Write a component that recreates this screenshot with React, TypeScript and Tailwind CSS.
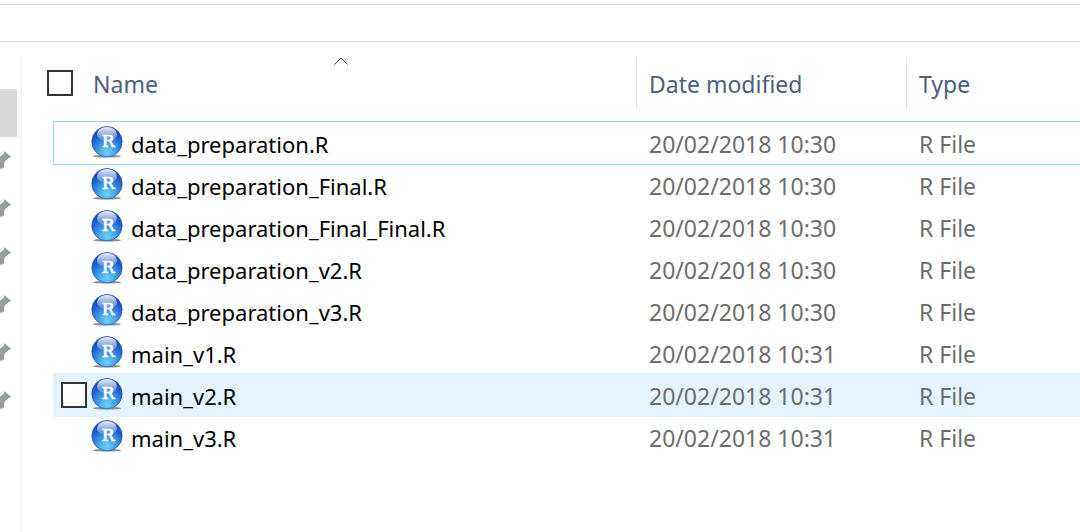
import { useState } from "react";

type FileEntry = { name: string; modified: string; type: string };

const files: FileEntry[] = [
  { name: "data_preparation.R", modified: "20/02/2018 10:30", type: "R File" },
  { name: "data_preparation_Final.R", modified: "20/02/2018 10:30", type: "R File" },
  { name: "data_preparation_Final_Final.R", modified: "20/02/2018 10:30", type: "R File" },
  { name: "data_preparation_v2.R", modified: "20/02/2018 10:30", type: "R File" },
  { name: "data_preparation_v3.R", modified: "20/02/2018 10:30", type: "R File" },
  { name: "main_v1.R", modified: "20/02/2018 10:31", type: "R File" },
  { name: "main_v2.R", modified: "20/02/2018 10:31", type: "R File" },
  { name: "main_v3.R", modified: "20/02/2018 10:31", type: "R File" },
];

const pins = [1, 2, 3, 4, 5, 6];

function IconDefs() {
  return (
    <svg className="absolute size-0" aria-hidden="true">
      <defs>
        <radialGradient id="ball" cx="0.5" cy="0.85" r="0.78">
          <stop offset="0" stopColor="#6fd3f7" />
          <stop offset="0.35" stopColor="#45a3e8" />
          <stop offset="0.75" stopColor="#1f60cf" />
          <stop offset="1" stopColor="#1a45b4" />
        </radialGradient>
        <linearGradient id="gloss" x1="0" y1="0" x2="0" y2="1">
          <stop offset="0" stopColor="#fff" stopOpacity="0.92" />
          <stop offset="1" stopColor="#fff" stopOpacity="0.1" />
        </linearGradient>
      </defs>
    </svg>
  );
}

function RFileIcon() {
  return (
    <svg viewBox="0 0 32 32" className="size-8 shrink-0" aria-hidden="true">
      <ellipse cx="16" cy="30.2" rx="14" ry="1.4" fill="#8d8d8d" />
      <circle cx="16" cy="15.7" r="15.2" fill="url(#ball)" stroke="#1c4ab5" strokeWidth="0.6" />
      <ellipse cx="16" cy="8.2" rx="10" ry="7.2" fill="url(#gloss)" />
      <text
        x="17.2"
        y="21.3"
        textAnchor="middle"
        fontSize="17"
        fill="#fff"
        stroke="#fff"
        strokeWidth="0.7"
        fontFamily="DejaVu Serif, serif"
      >
        R
      </text>
    </svg>
  );
}

function PinIcon() {
  return (
    <svg viewBox="0 0 12 20" className="h-5 w-3" fill="#929da3" aria-hidden="true">
      <path d="M4.5 1L11 7L9.5 8L8.5 8L4.5 12L4 17L2.5 18.5L0 18.5V6.5L4 3.5Z" />
    </svg>
  );
}

function Tick({ label }: { label: string }) {
  return (
    <input
      type="checkbox"
      aria-label={label}
      className="block size-[26px] shrink-0 appearance-none border-2 border-[#333] bg-white checked:bg-[#0078d7]"
    />
  );
}

export default function App() {
  const [focused, setFocused] = useState(0);
  const hovered = 6;

  return (
    <div className="min-h-screen overflow-x-hidden bg-white font-['Noto_Sans','Open_Sans',sans-serif] text-[23px] leading-8">
      <IconDefs />
      <header className="mt-1 h-[38px] border-y border-[#d9d9d9]" />
      <div className="flex">
        <nav className="mt-[15px] flex min-h-[475px] w-[22px] shrink-0 flex-col border-r-2 border-[#f5f5f5] pt-8">
          <button aria-label="Current folder" className="mr-[3px] h-12 bg-[#d9d9d9]" />
          {pins.map((n) => (
            <button key={n} aria-label={`Pinned folder ${n}`} className="flex h-12 items-start pt-[13px]">
              <PinIcon />
            </button>
          ))}
        </nav>
        <main className="min-w-0 flex-1 pl-8">
          <table className="w-full table-fixed border-collapse text-left">
            <colgroup>
              <col className="w-[37px]" />
              <col />
              <col className="w-[270px]" />
              <col className="w-[174px]" />
            </colgroup>
            <thead className="text-[#4c607a]">
              <tr className="h-20 align-top">
                <th colSpan={2} className="p-0 pt-[15px] font-normal">
                  <div className="relative -ml-2 flex h-[52px] items-center gap-5 pl-px">
                    <Tick label="Select all" />
                    <button className="pt-0.5">Name</button>
                    <svg
                      viewBox="0 0 14 8"
                      className="absolute top-0 left-1/2 h-2 w-3.5 -translate-x-1/2"
                      fill="none"
                      stroke="#444"
                      aria-hidden="true"
                    >
                      <path d="M0.5 7.5L7 1L13.5 7.5" />
                    </svg>
                  </div>
                </th>
                <th className="p-0 pt-[15px] font-normal">
                  <div className="flex h-[52px] items-center border-l border-[#e2e2e2] pl-3">
                    <button className="pt-0.5">Date modified</button>
                  </div>
                </th>
                <th className="p-0 pt-[15px] font-normal">
                  <div className="flex h-[52px] items-center border-l border-[#e2e2e2] pl-3">
                    <button className="pt-0.5">Type</button>
                  </div>
                </th>
              </tr>
            </thead>
            <tbody className="text-[#6d6d6d]">
              {files.map((file, i) => (
                <tr
                  key={file.name}
                  onClick={() => setFocused(i)}
                  className={
                    i === hovered
                      ? "h-[42px] align-top bg-[#e5f3ff] shadow-[0_0_0_1px_#e5f3ff]"
                      : i === focused
                        ? "h-[42px] align-top shadow-[0_0_0_1px_#99d1ff]"
                        : "h-[42px] align-top"
                  }
                >
                  <td className="p-0 pt-2 pl-[7px]">{i === hovered && <Tick label={`Select ${file.name}`} />}</td>
                  <td className="p-0 pt-1">
                    <div className="flex items-start gap-2 text-black">
                      <RFileIcon />
                      <span className="pt-0.5 text-[22px] leading-8">{file.name}</span>
                    </div>
                  </td>
                  <td className="p-0 pt-1.5 pl-[13px]">{file.modified}</td>
                  <td className="p-0 pt-1.5 pl-[13px]">{file.type}</td>
                </tr>
              ))}
            </tbody>
          </table>
        </main>
      </div>
    </div>
  );
}
